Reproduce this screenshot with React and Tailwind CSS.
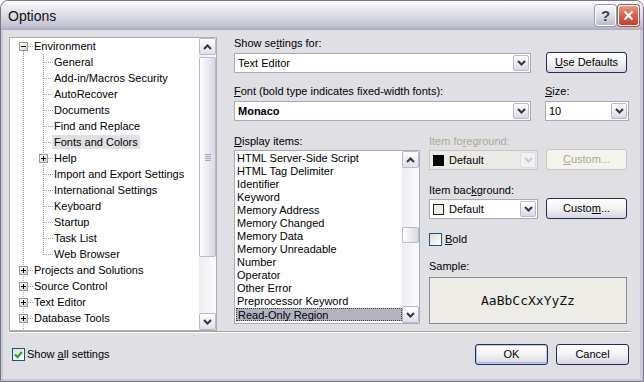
import React from "react";

function ChevDown({ c = "#34344a" }) {
  return (
    <svg width="9" height="6" viewBox="0 0 9 6" className="block">
      <path d="M1 1 L4.5 4.5 L8 1" fill="none" stroke={c} strokeWidth="2" />
    </svg>
  );
}
function ChevUp({ c = "#34344a" }) {
  return (
    <svg width="9" height="6" viewBox="0 0 9 6" className="block">
      <path d="M1 5 L4.5 1.5 L8 5" fill="none" stroke={c} strokeWidth="2" />
    </svg>
  );
}

function ScrollBtn({ up }) {
  return (
    <div className="flex h-[17px] w-full shrink-0 items-center justify-center rounded-[2px] border border-[#b7b9cc] bg-[linear-gradient(to_bottom,#ffffff,#dfdfe8)]">
      {up ? <ChevUp /> : <ChevDown />}
    </div>
  );
}

function Grip() {
  return (
    <div className="flex flex-col gap-px">
      <div className="h-px w-[6px] bg-[#a4a5b8]" />
      <div className="h-px w-[6px] bg-[#a4a5b8]" />
      <div className="h-px w-[6px] bg-[#a4a5b8]" />
      <div className="h-px w-[6px] bg-[#a4a5b8]" />
    </div>
  );
}

function Combo({ w, disabled, children }) {
  return (
    <div
      className={`${w} flex h-[20px] shrink-0 border p-px ${
        disabled ? "border-[#c9c7ba] bg-[#ebeae6]" : "border-[#a5acb5] bg-white"
      }`}
    >
      <div className="flex min-w-0 flex-1 items-center gap-[5px] pl-px">{children}</div>
      <div
        className={`flex w-[16px] shrink-0 items-center justify-center rounded-[2px] border ${
          disabled
            ? "border-[#dcdce2] bg-[#f1f1f3]"
            : "border-[#b7b9cc] bg-[linear-gradient(to_bottom,#ffffff,#d9d9e3)]"
        }`}
      >
        <ChevDown c={disabled ? "#c8c8d0" : "#34344a"} />
      </div>
    </div>
  );
}

function Btn({ w, disabled, def, children }) {
  return (
    <div
      className={`${w} flex h-[21px] shrink-0 items-center justify-center rounded-[3px] border text-[11px] ${
        disabled
          ? "border-[#c9c7ba] bg-[#f4f3ee] text-[#aca899]"
          : "border-[#252a58] bg-[linear-gradient(to_bottom,#ffffff,#f4f4f7_45%,#d7d6e1)] text-black"
      } ${def ? "shadow-[inset_0_0_0_1px_#b9c9ef,inset_0_-1px_0_1px_#a5b9e8]" : ""}`}
    >
      {children}
    </div>
  );
}

function CheckBox({ checked }) {
  return (
    <div className="flex h-[13px] w-[13px] shrink-0 items-center justify-center border border-[#1c5180] bg-[linear-gradient(135deg,#dcdcd7,#ffffff)]">
      {checked && (
        <svg width="9" height="9" viewBox="0 0 9 9" className="block">
          <path d="M1 4.5 L3.5 7 L8 2" fill="none" stroke="#21a121" strokeWidth="2" />
        </svg>
      )}
    </div>
  );
}

const LINE = "#a3a29b";

function Cell({ v, h, box }) {
  return (
    <svg width="20" height="16" viewBox="0 0 20 16" className="block shrink-0">
      {v === "full" && <line x1="10.5" y1="0" x2="10.5" y2="16" stroke={LINE} strokeDasharray="1 1" />}
      {v === "top" && <line x1="10.5" y1="0" x2="10.5" y2="9" stroke={LINE} strokeDasharray="1 1" />}
      {v === "bottom" && <line x1="10.5" y1="9" x2="10.5" y2="16" stroke={LINE} strokeDasharray="1 1" />}
      {h && <line x1="11" y1="8.5" x2="20" y2="8.5" stroke={LINE} strokeDasharray="1 1" />}
      {box && (
        <g>
          <rect x="6.5" y="4.5" width="8" height="8" fill="url(#xpbox)" stroke="#919b9c" />
          <line x1="8" y1="8.5" x2="13" y2="8.5" stroke="#000" />
          {box === "plus" && <line x1="10.5" y1="6" x2="10.5" y2="11" stroke="#000" />}
        </g>
      )}
    </svg>
  );
}

const treeRows = [
  { t: "Environment", c: [{ v: "bottom", h: true, box: "minus" }] },
  { t: "General", c: [{ v: "full" }, { v: "full", h: true }] },
  { t: "Add-in/Macros Security", c: [{ v: "full" }, { v: "full", h: true }] },
  { t: "AutoRecover", c: [{ v: "full" }, { v: "full", h: true }] },
  { t: "Documents", c: [{ v: "full" }, { v: "full", h: true }] },
  { t: "Find and Replace", c: [{ v: "full" }, { v: "full", h: true }] },
  { t: "Fonts and Colors", sel: true, c: [{ v: "full" }, { v: "full", h: true }] },
  { t: "Help", c: [{ v: "full" }, { v: "full", h: true, box: "plus" }] },
  { t: "Import and Export Settings", c: [{ v: "full" }, { v: "full", h: true }] },
  { t: "International Settings", c: [{ v: "full" }, { v: "full", h: true }] },
  { t: "Keyboard", c: [{ v: "full" }, { v: "full", h: true }] },
  { t: "Startup", c: [{ v: "full" }, { v: "full", h: true }] },
  { t: "Task List", c: [{ v: "full" }, { v: "full", h: true }] },
  { t: "Web Browser", c: [{ v: "full" }, { v: "top", h: true }] },
  { t: "Projects and Solutions", c: [{ v: "full", h: true, box: "plus" }] },
  { t: "Source Control", c: [{ v: "full", h: true, box: "plus" }] },
  { t: "Text Editor", c: [{ v: "full", h: true, box: "plus" }] },
  { t: "Database Tools", c: [{ v: "full", h: true, box: "plus" }] },
  { t: "", c: [{ v: "full", h: true, box: "plus" }] },
];

const listItems = [
  "HTML Server-Side Script",
  "HTML Tag Delimiter",
  "Identifier",
  "Keyword",
  "Memory Address",
  "Memory Changed",
  "Memory Data",
  "Memory Unreadable",
  "Number",
  "Operator",
  "Other Error",
  "Preprocessor Keyword",
  "Read-Only Region",
];

export default function App() {
  return (
    <div className="h-[382px] w-[644px] bg-white font-['Liberation_Sans',Arial,sans-serif] text-[11px] text-black">
      <svg width="0" height="0" className="block">
        <defs>
          <linearGradient id="xpbox" x1="0" y1="0" x2="1" y2="1">
            <stop offset="0" stopColor="#ffffff" />
            <stop offset="1" stopColor="#cfcfc6" />
          </linearGradient>
        </defs>
      </svg>
      <div className="flex h-[382px] w-[644px] flex-col overflow-hidden rounded-t-[8px] border border-[#76758a]">
        {/* Title bar */}
        <div className="flex h-[29px] shrink-0 items-center rounded-t-[7px] bg-[linear-gradient(to_bottom,#ffffff_0%,#ececf2_20%,#d9d9e3_55%,#c4c4d3_85%,#adadc2_100%)] pl-[7px] pr-[4px]">
          <div className="flex-1 text-[14px] leading-[14px] text-[#111]">Options</div>
          <div className="flex gap-[2px]">
            <div className="flex h-[21px] w-[21px] items-center justify-center rounded-[3px] border border-white bg-[linear-gradient(to_bottom,#fbfbfd,#d2d2de_70%,#b9b9c9)] shadow-[0_0_0_1px_#9a9aae]">
              <span className="text-[15px] font-bold leading-[15px] text-[#3d3d55]">?</span>
            </div>
            <div className="flex h-[21px] w-[21px] items-center justify-center rounded-[3px] border border-white bg-[linear-gradient(to_bottom,#eb9a89,#d6604a_50%,#c2432b)] shadow-[0_0_0_1px_#a55b55]">
              <svg width="11" height="11" viewBox="0 0 11 11" className="block">
                <path d="M1.5 1.5 L9.5 9.5 M9.5 1.5 L1.5 9.5" stroke="#fff" strokeWidth="2.2" />
              </svg>
            </div>
          </div>
        </div>

        {/* Body */}
        <div className="flex flex-1 flex-col border-x-[2px] border-r-[3px] border-b-[2px] border-[#c8c7d2] bg-[#e0dfe3]">
          <div className="flex pl-[6px] pt-[7px]">
            {/* Tree */}
            <div className="flex h-[294px] w-[208px] shrink-0 border border-[#a5acb5] bg-white">
              <div className="min-w-0 flex-1 overflow-hidden">
                {treeRows.map((r, idx) => (
                  <div key={idx} className="flex h-[16px] items-center pl-[3px]">
                    {r.c.map((c, i) => (
                      <Cell key={i} {...c} />
                    ))}
                    {r.t && (
                      <span
                        className={`ml-[-1px] h-[14px] whitespace-nowrap px-[2px] leading-[14px] ${
                          r.sel ? "bg-[#e0dfe3]" : ""
                        }`}
                      >
                        {r.t}
                      </span>
                    )}
                  </div>
                ))}
              </div>
              <div className="flex w-[17px] shrink-0 flex-col bg-[linear-gradient(to_right,#ececf1,#fcfcfd)]">
                <ScrollBtn up />
                <div className="mt-[2px] flex h-[200px] items-center justify-center rounded-[2px] border border-[#b7b9cc] bg-[linear-gradient(to_right,#fdfdfe,#d9d9e3)]">
                  <Grip />
                </div>
                <div className="flex-1" />
                <ScrollBtn />
              </div>
            </div>

            {/* Right panel */}
            <div className="ml-[17px] flex w-[396px] flex-col">
              <div className="h-[13px] leading-[13px]">
                Show se<span className="underline">t</span>tings for:
              </div>
              <div className="mt-[2px] flex items-end">
                <Combo w="w-[297px]">
                  <span className="pl-px">Text Editor</span>
                </Combo>
                <div className="ml-[15px]">
                  <Btn w="w-[81px]">
                    <span>
                      <span className="underline">U</span>se Defaults
                    </span>
                  </Btn>
                </div>
              </div>

              <div className="mt-[12px] flex h-[13px] leading-[13px]">
                <div className="w-[311px]">
                  <span className="underline">F</span>ont (bold type indicates fixed-width fonts):
                </div>
                <div>
                  <span className="underline">S</span>ize:
                </div>
              </div>
              <div className="mt-[3px] flex">
                <Combo w="w-[297px]">
                  <span className="pl-px font-bold">Monaco</span>
                </Combo>
                <div className="ml-[14px]">
                  <Combo w="w-[84px]">
                    <span className="pl-px">10</span>
                  </Combo>
                </div>
              </div>

              <div className="mt-[14px] flex">
                {/* Display items */}
                <div className="flex w-[186px] shrink-0 flex-col">
                  <div className="h-[13px] leading-[13px]">
                    <span className="underline">D</span>isplay items:
                  </div>
                  <div className="mt-[2px] flex h-[174px] border border-[#a5acb5] bg-white">
                    <div className="min-w-0 flex-1 overflow-hidden pl-px pt-px">
                      {listItems.map((t, i) => (
                        <div
                          key={t}
                          className={`h-[13px] whitespace-nowrap pl-px leading-[12px] ${
                            i === listItems.length - 1
                              ? "border border-dotted border-[#3a3a3a] bg-[#b2b3bf] pl-0 leading-[11px]"
                              : ""
                          }`}
                        >
                          {t}
                        </div>
                      ))}
                    </div>
                    <div className="flex w-[17px] shrink-0 flex-col bg-[linear-gradient(to_right,#ececf1,#fcfcfd)]">
                      <ScrollBtn up />
                      <div className="mt-[59px] h-[16px] rounded-[2px] border border-[#b7b9cc] bg-[linear-gradient(to_right,#fdfdfe,#d9d9e3)]" />
                      <div className="flex-1" />
                      <ScrollBtn />
                    </div>
                  </div>
                </div>

                {/* Item colours */}
                <div className="ml-[9px] flex w-[198px] flex-col">
                  <div className="h-[13px] leading-[13px] text-[#aca899]">
                    Item fo<span className="underline">r</span>eground:
                  </div>
                  <div className="mt-px flex items-end">
                    <Combo w="w-[109px]" disabled>
                      <span className="ml-px h-[11px] w-[11px] shrink-0 bg-black" />
                      <span>Default</span>
                    </Combo>
                    <div className="ml-[8px]">
                      <Btn w="w-[81px]" disabled>
                        <span>
                          <span className="underline">C</span>ustom...
                        </span>
                      </Btn>
                    </div>
                  </div>

                  <div className="mt-[14px] h-[13px] leading-[13px]">
                    Item bac<span className="underline">k</span>ground:
                  </div>
                  <div className="mt-px flex items-end">
                    <Combo w="w-[109px]">
                      <span className="ml-px h-[11px] w-[11px] shrink-0 border border-[#222] bg-[#eeede6]" />
                      <span>Default</span>
                    </Combo>
                    <div className="ml-[8px]">
                      <Btn w="w-[81px]">
                        <span>
                          Custo<span className="underline">m</span>...
                        </span>
                      </Btn>
                    </div>
                  </div>

                  <div className="mt-[14px] flex h-[13px] items-center">
                    <CheckBox />
                    <span className="ml-[3px] leading-[13px]">
                      <span className="underline">B</span>old
                    </span>
                  </div>

                  <div className="mt-[14px] h-[13px] leading-[13px]">Sample:</div>
                  <div className="mt-[4px] flex h-[47px] items-center justify-center border border-[#8a8a8a] bg-[#edece6]">
                    <span className="font-['DejaVu_Sans_Mono',monospace] text-[13px] text-[#101010]">
                      AaBbCcXxYyZz
                    </span>
                  </div>
                </div>
              </div>
            </div>
          </div>

          {/* Separator */}
          <div className="ml-[6px] mr-[9px] h-[2px] border-t border-b border-t-[#aca899] border-b-white" />

          {/* Bottom row */}
          <div className="mt-[11px] flex items-center pl-[9px] pr-[11px]">
            <CheckBox checked />
            <span className="ml-[2px] flex-1 leading-[13px]">
              Show <span className="underline">a</span>ll settings
            </span>
            <div className="flex gap-[8px]">
              <Btn w="w-[73px]" def>
                OK
              </Btn>
              <Btn w="w-[73px]">Cancel</Btn>
            </div>
          </div>
        </div>
      </div>
    </div>
  );
}
